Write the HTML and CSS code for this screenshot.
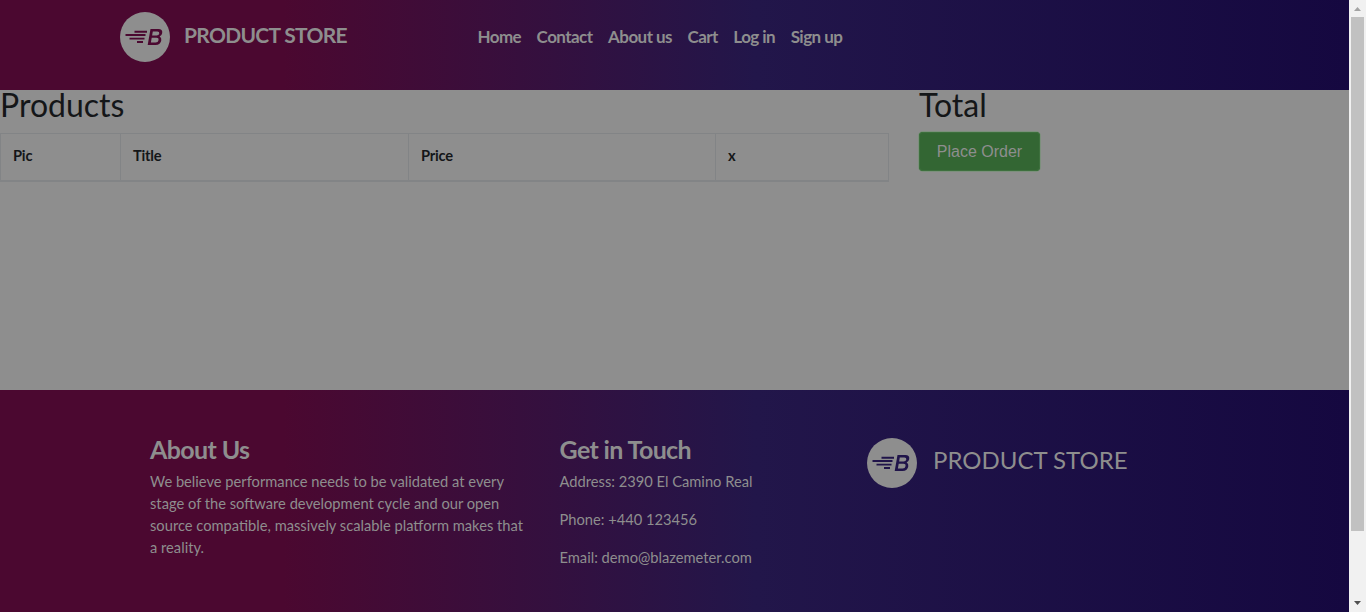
FILE: index.html
```html
<!DOCTYPE html>
<html lang="en">
<head>
<meta charset="utf-8">
<title>STORE</title>
<link rel="stylesheet" href="styles.css">
</head>
<body>
<svg class="symbols" aria-hidden="true">
  <symbol id="logo" viewBox="0 0 50 50">
    <circle cx="25" cy="25" r="25" fill="#8e8e8e"/>
    <path d="M14.500 19.700H27M5.500 23H25.500M9.500 26.600H24.500M17 30H23" fill="none" stroke="currentColor" stroke-width="1.900"/>
    <path fill="currentColor" fill-rule="evenodd" d="M30.500 17H38.300Q42.800 17 42.200 20.900Q41.800 23.600 39.600 24.500Q41.700 25.500 41.300 28.300Q40.600 33 35.500 33H27.700ZM32.800 19.400 32.100 23.500H36.700Q38.900 23.500 39.300 21.400Q39.600 19.400 37.400 19.400ZM31.700 25.800 30.900 30.500H35.700Q38.100 30.500 38.500 28.200Q38.900 25.800 36.500 25.800Z"/>
  </symbol>
</svg>
<div class="window">
  <div class="page">
    <header class="navbar">
      <a class="brand"><svg class="logo"><use href="#logo"/></svg><span>PRODUCT STORE</span></a>
      <nav class="nav"><a>Home</a><a>Contact</a><a>About us</a><a>Cart</a><a>Log in</a><a>Sign up</a></nav>
    </header>
    <main class="content">
      <section class="products">
        <h2>Products</h2>
        <table>
          <thead><tr><th class="c1">Pic</th><th class="c2">Title</th><th class="c3">Price</th><th>x</th></tr></thead>
        </table>
      </section>
      <section class="total">
        <h2>Total</h2>
        <button type="button">Place Order</button>
      </section>
    </main>
    <footer class="footer">
      <section class="about">
        <h4>About Us</h4>
        <p>We believe performance needs to be validated at every stage of the software development cycle and our open source compatible, massively scalable platform makes that a reality.</p>
      </section>
      <section class="contact">
        <h4>Get in Touch</h4>
        <p>Address: 2390 El Camino Real</p>
        <p>Phone: +440 123456</p>
        <p>Email: demo@blazemeter.com</p>
      </section>
      <section class="foot-brand"><svg class="logo"><use href="#logo"/></svg><span>PRODUCT STORE</span></section>
    </footer>
  </div>
  <div class="scrollbar">
    <svg class="arrow" viewBox="0 0 17 17"><path d="M5 11 8.500 7 12 11Z" fill="#a3a3a3"/></svg>
    <div class="thumb"></div>
    <svg class="arrow down" viewBox="0 0 17 17"><path d="M5 6 8.500 10 12 6Z" fill="#505050"/></svg>
  </div>
</div>
</body>
</html>
```

FILE: styles.css
```css
* { box-sizing: border-box; }
body { margin: 0; overflow: hidden; font: 14.7px/22px Lato, sans-serif; color: #141618; }
h2, h4, p { margin: 0; }
.symbols { display: none; }
.window { display: flex; width: 1366px; height: 612px; }
.page { width: 1349px; display: flex; flex-direction: column; background: #8e8e8e; }
.navbar, .footer { background: linear-gradient(90deg, #4b0830 0%, #4b0830 21%, #22164a 56%, #150840 100%); color: #8e8e8e; }
.navbar { height: 90px; display: flex; padding: 12px 0 0 120px; }
.brand { display: flex; width: 357.4px; color: #4b0830; }
.brand span { margin: 8px 0 0 14px; font-size: 21px; line-height: 30px; font-weight: 700; letter-spacing: -.7px; color: #8e8e8e; white-space: nowrap; }
.logo { width: 50px; height: 50px; flex: none; }
.nav { display: flex; gap: 15.5px; padding-top: 13px; font-size: 17px; line-height: 24px; font-weight: 700; letter-spacing: -.55px; white-space: nowrap; }
.content { height: 300px; display: flex; }
.products { width: 889px; margin-right: 30px; }
h2 { height: 43px; font-size: 32px; line-height: 30px; font-weight: 400; }
table { width: 889px; border-collapse: collapse; table-layout: fixed; }
th { height: 47px; padding: 0 12px 4px; border: 1px solid #828486; border-bottom-width: 2px; text-align: left; font-weight: 700; letter-spacing: -.2px; line-height: 22px; }
.c1 { width: 120px; }
.c2 { width: 288px; }
.c3 { width: 307px; }
.total button { display: block; width: 121px; height: 39px; margin-top: -1px; padding: 0; border: 0; border-radius: 4px; background: #336633; box-shadow: inset 0 0 0 1px #3d703d, 0 0 0 1px #7c907c; color: #8e8e8e; font: 16px/24px "Liberation Sans", Arial, sans-serif; }
.total button { padding-top: 1px; }
.footer { height: 222px; display: flex; padding: 47px 0 0 150px; }
.about { width: 409.5px; padding-right: 30px; }
.contact { width: 307.5px; }
.contact p + p { margin-top: 16px; }
h4 { height: 33px; font-size: 25px; line-height: 24px; font-weight: 700; letter-spacing: -.62px; }
.foot-brand { display: flex; padding-top: 1px; color: #20144a; }
.foot-brand span { margin: 7px 0 0 16px; color: #8e8e8e; font-size: 24px; line-height: 30px; white-space: nowrap; }
.scrollbar { width: 17px; display: flex; flex-direction: column; background: #f1f1f1; }
.arrow { width: 17px; height: 17px; flex: none; }
.thumb { width: 13px; height: 514px; margin-left: 2px; background: #c1c1c1; }
.down { margin-top: auto; }
```
